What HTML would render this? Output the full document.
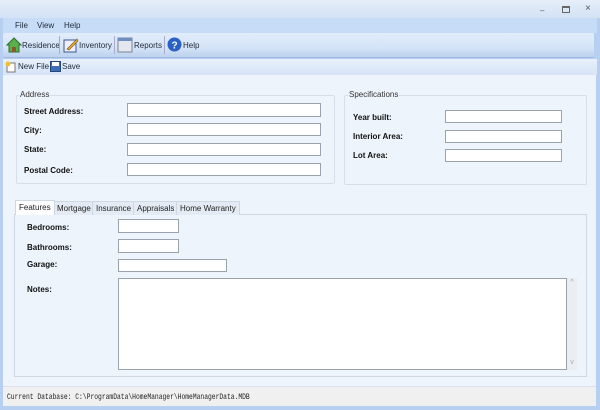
<!DOCTYPE html>
<html><head><style>
*{margin:0;padding:0;box-sizing:border-box}
body{width:600px;height:410px;overflow:hidden;font-family:"Liberation Sans",Tahoma,sans-serif;font-size:9px;background:#a9c4ea;position:relative}
.a{position:absolute}
.title{left:0;top:0;width:600px;height:18px;background:linear-gradient(#e6eef9,#d4e2f5)}
.frame{left:0;top:18px;width:600px;height:392px;background:#b7cff0;}
.menu{left:3px;top:18px;width:594px;height:15px;background:#c7dcf6}
.menu span{position:absolute;top:3px;font-size:8px;color:#1e2a3a}
.tb{left:3px;top:33px;width:591px;height:25px;background:linear-gradient(#e2edfb,#d5e4f8 60%,#bcd2ef);border-radius:2px;border-bottom:1px solid #9fb9de}
.tb2{left:3px;top:59px;width:594px;height:16px;background:linear-gradient(#e8f0fb,#d6e4f6)}
.tb span,.tb2 span{position:absolute;font-size:8px;color:#1e2a3a}
.main{left:3px;top:75px;width:593px;height:311px;background:#eef4fc}
.status{left:3px;top:386px;width:593px;height:20px;background:#f0f0f0;border-top:1px solid #dde}
.grp{border:1px solid #d5dfea;border-radius:2px}
.lg{font-size:8px;color:#333;background:#eef4fc;padding:0 1px}
.lb{font-size:8px;font-weight:bold;color:#111}
.in{background:#fff;border:1px solid #9aa3ad}
.tab{top:201px;height:14px;font-size:8px;color:#222;border:1px solid #cfd8e2;border-bottom:none;background:#e4ebf4;padding:2px 3px 0}
</style></head><body>
<div class="a title"></div>
<div class="a frame"></div>
<div class="a" style="left:540px;top:6px;font-size:8px;color:#555">–</div>
<div class="a" style="left:562px;top:6px;width:8px;height:7px;border:1px solid #666;border-top-width:2px"></div>
<div class="a" style="left:585px;top:3px;font-size:10px;color:#555">×</div>
<div class="a menu"><span style="left:12px">File</span><span style="left:34px">View</span><span style="left:61px">Help</span></div>
<div class="a tb">
<svg class="a" style="left:3px;top:4px" width="16" height="16"><path d="M1 8 L8 1 L15 8 L13 8 L13 15 L3 15 L3 8Z" fill="#5ab04a" stroke="#2d6e2a"/><rect x="6" y="10" width="4" height="5" fill="#8b5a2b"/></svg>
<span style="left:19px;top:8px">Residence</span>
<div class="a" style="left:56px;top:3px;width:1px;height:18px;background:#aac"></div>
<svg class="a" style="left:60px;top:4px" width="16" height="16"><rect x="1" y="3" width="12" height="12" fill="#eef" stroke="#35588f"/><path d="M4 12 L14 2 L15 4 L6 13Z" fill="#e8b030" stroke="#805010" stroke-width=".6"/></svg>
<span style="left:76px;top:8px">Inventory</span>
<div class="a" style="left:111px;top:3px;width:1px;height:18px;background:#aac"></div>
<svg class="a" style="left:114px;top:4px" width="16" height="16"><rect x="1" y="1" width="14" height="14" fill="#e4e8ee" stroke="#7a8494"/><rect x="1" y="1" width="14" height="3" fill="#6b8fc4"/></svg>
<span style="left:131px;top:8px">Reports</span>
<div class="a" style="left:161px;top:3px;width:1px;height:18px;background:#aac"></div>
<svg class="a" style="left:164px;top:4px" width="15" height="15"><circle cx="7.5" cy="7.5" r="7" fill="#2a62c4"/><text x="4.5" y="11.5" font-size="10" font-weight="bold" fill="#fff" font-family="Liberation Sans">?</text></svg>
<span style="left:180px;top:8px">Help</span>
</div>
<div class="a tb2">
<svg class="a" style="left:2px;top:2px" width="11" height="12"><rect x="2" y="2" width="8" height="9" fill="#fff" stroke="#777"/><circle cx="3" cy="3" r="2.5" fill="#f0c030"/></svg>
<span style="left:15px;top:3px">New File</span>
<svg class="a" style="left:47px;top:2px" width="11" height="11"><rect x="0.5" y="0.5" width="10" height="10" fill="#3d6fb8" stroke="#24477c"/><rect x="2" y="1" width="7" height="4" fill="#fff"/></svg>
<span style="left:59px;top:3px">Save</span>
</div>
<div class="a main"></div>
<div class="a grp" style="left:16px;top:95px;width:319px;height:89px"></div>
<div class="a lg" style="left:19px;top:90px">Address</div>
<div class="a lb" style="left:24px;top:107px">Street Address:</div>
<div class="a lb" style="left:24px;top:126px">City:</div>
<div class="a lb" style="left:24px;top:145px">State:</div>
<div class="a lb" style="left:24px;top:166px">Postal Code:</div>
<div class="a in" style="left:127px;top:103px;width:194px;height:14px"></div>
<div class="a in" style="left:127px;top:123px;width:194px;height:13px"></div>
<div class="a in" style="left:127px;top:143px;width:194px;height:13px"></div>
<div class="a in" style="left:127px;top:163px;width:194px;height:13px"></div>
<div class="a grp" style="left:344px;top:95px;width:243px;height:90px"></div>
<div class="a lg" style="left:348px;top:90px">Specifications</div>
<div class="a lb" style="left:353px;top:113px">Year built:</div>
<div class="a lb" style="left:353px;top:132px">Interior Area:</div>
<div class="a lb" style="left:353px;top:151px">Lot Area:</div>
<div class="a in" style="left:445px;top:110px;width:117px;height:13px"></div>
<div class="a in" style="left:445px;top:130px;width:117px;height:13px"></div>
<div class="a in" style="left:445px;top:149px;width:117px;height:13px"></div>
<div class="a" style="left:14px;top:214px;width:573px;height:163px;border:1px solid #cfd8e2;background:#eef4fc"></div>
<div class="a tab" style="left:15px;top:200px;height:15px;background:#fff;z-index:2">Features</div>
<div class="a tab" style="left:53px">Mortgage</div>
<div class="a tab" style="left:92px">Insurance</div>
<div class="a tab" style="left:133px">Appraisals</div>
<div class="a tab" style="left:176px">Home Warranty</div>
<div class="a lb" style="left:27px;top:223px">Bedrooms:</div>
<div class="a lb" style="left:27px;top:243px">Bathrooms:</div>
<div class="a lb" style="left:27px;top:260px">Garage:</div>
<div class="a lb" style="left:27px;top:285px">Notes:</div>
<div class="a in" style="left:118px;top:219px;width:61px;height:14px"></div>
<div class="a in" style="left:118px;top:239px;width:61px;height:14px"></div>
<div class="a in" style="left:118px;top:259px;width:109px;height:13px"></div>
<div class="a in" style="left:118px;top:278px;width:449px;height:92px"></div>
<div class="a" style="left:567px;top:278px;width:10px;height:92px;background:#eaedf1;color:#aaa;font-size:7px;text-align:center;line-height:10px">^<br><br><br><br><br><br><br><br>v</div>
<div class="a status"></div>
<div class="a" style="left:7px;top:393px;font-family:'Liberation Mono',monospace;font-size:8px;color:#222;transform:scaleX(0.79);transform-origin:0 0;white-space:nowrap">Current Database: C:\ProgramData\HomeManager\HomeManagerData.MDB</div>
</body></html>
